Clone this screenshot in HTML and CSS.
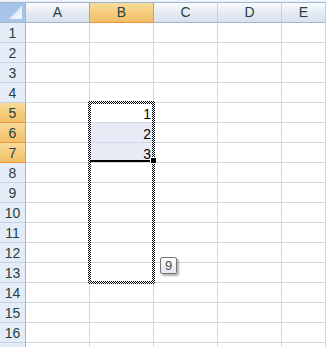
FILE: index.html
```html
<!DOCTYPE html>
<html lang="en">
    <head>
        <meta charset="UTF-8">
        <title>Sheet1</title>
        <link rel="stylesheet" href="styles.css">
    </head>
    <body>
        <div class="sheet">
            <div class="grid">
                <div class="corner"><span class="corner-tri"></span></div>
                <div class="col-head">A</div>
                <div class="col-head active">B</div>
                <div class="col-head">C</div>
                <div class="col-head">D</div>
                <div class="col-head">E</div>
            </div>
            <div id="rows" class="grid rows"></div>

            <div class="marquee"></div>
            <div class="fill-bar"></div>
            <div class="handle"></div>
            <div class="tip">9</div>
        </div>

        <script>
            let rows = document.getElementById("rows");
            let values = { 5: "1", 6: "2", 7: "3" };
            let html = "";
            for (let r = 1; r <= 17; r++) {
                let sel = (r >= 5 && r <= 7) ? " active" : "";
                // row 17 is cut by the window edge, keep its header blank
                let label = r < 17 ? r : "";
                html += `<div class="row-head${sel}">${label}</div>`;
                html += `<div class="cell"></div>`;
                let shade = (r == 6 || r == 7) ? " shaded" : "";
                html += `<div class="cell num${shade}">${values[r] || ""}</div>`;
                html += `<div class="cell"></div><div class="cell"></div><div class="cell"></div>`;
            }
            rows.innerHTML = html;
        </script>
    </body>
</html>
```

FILE: styles.css
```css
body {
    margin: 0;
    overflow: hidden;
    background: #fff;
    font-family: "Liberation Sans", Arial, sans-serif;
}

.sheet {
    position: relative;
    width: 326px;
    height: 347px;
    overflow: hidden;
    padding-top: 2px;
    box-sizing: border-box;
    background: linear-gradient(#f4f7fb, #e6edf6) top / 100% 2px no-repeat;
}

.grid {
    display: grid;
    grid-template-columns: 26px 64px 64px 64px 64px 1fr;
}

.corner,
.col-head {
    box-sizing: border-box;
    height: 21px;
    border-top: 1px solid #9eb6ce;
    border-bottom: 1px solid #9eb6ce;
    border-right: 1px solid #9eb6ce;
}

.corner {
    position: relative;
    background: #a9c4e9;
}

.corner-tri {
    position: absolute;
    right: 3px;
    bottom: 3px;
    width: 13px;
    height: 13px;
    background: linear-gradient(135deg, #d6e3f3, #f3f7fc);
    clip-path: polygon(100% 0, 100% 100%, 0 100%);
}

.col-head {
    background: linear-gradient(#f9fbfd, #e4eaf3 55%, #d9e1ec);
    color: #27413e;
    font-size: 14px;
    line-height: 19px;
    text-align: center;
    border-right-color: #c5d1df;
}

.col-head.active {
    background: linear-gradient(#f9dc9b, #f4c978 60%, #f1c068);
    border-bottom-color: #f29536;
    border-right-color: #f29536;
    border-left: 1px solid #f29536;
    margin-left: -1px;
}

.row-head {
    box-sizing: border-box;
    height: 20px;
    background: #e4ecf7;
    border-right: 1px solid #9eb6ce;
    border-bottom: 1px solid #c5d2e3;
    color: #27413e;
    font-size: 14px;
    line-height: 20px;
    text-align: center;
}

.row-head.active {
    background: linear-gradient(#f9dc9b, #f4c978 60%, #f1c068);
    border-right-color: #f29536;
    border-bottom-color: #f29536;
}

.cell {
    box-sizing: border-box;
    height: 20px;
    border-right: 1px solid #d0d7e5;
    border-bottom: 1px solid #d0d7e5;
    font-size: 14px;
    line-height: 22px;
    color: #000;
}

.num {
    text-align: right;
    padding-right: 2px;
}

.shaded {
    background: #e8eaf5;
}

.marquee {
    position: absolute;
    left: 88px;
    top: 101px;
    width: 67px;
    height: 183px;
    box-sizing: border-box;
    padding: 3px;
    background: repeating-conic-gradient(#000 0 25%, #fff 0 50%) 0 0 / 2px 2px;
    -webkit-mask: linear-gradient(#000 0 0) content-box, linear-gradient(#000 0 0);
    -webkit-mask-composite: xor;
    mask-composite: exclude;
}

.fill-bar {
    position: absolute;
    left: 90px;
    top: 160px;
    width: 62px;
    height: 2px;
    background: #000;
}

.handle {
    position: absolute;
    left: 151px;
    top: 158px;
    width: 5px;
    height: 5px;
    background: #000;
    outline: 1px solid #fff;
}

.tip {
    position: absolute;
    left: 160px;
    top: 257px;
    width: 15px;
    height: 15px;
    border: 1px solid #767676;
    border-radius: 2px;
    background: linear-gradient(#fff, #e4e5f0);
    box-shadow: 2px 2px 2px rgba(0, 0, 0, 0.3);
    color: #4c4c4c;
    font-size: 13px;
    line-height: 16px;
    text-align: center;
}
```
